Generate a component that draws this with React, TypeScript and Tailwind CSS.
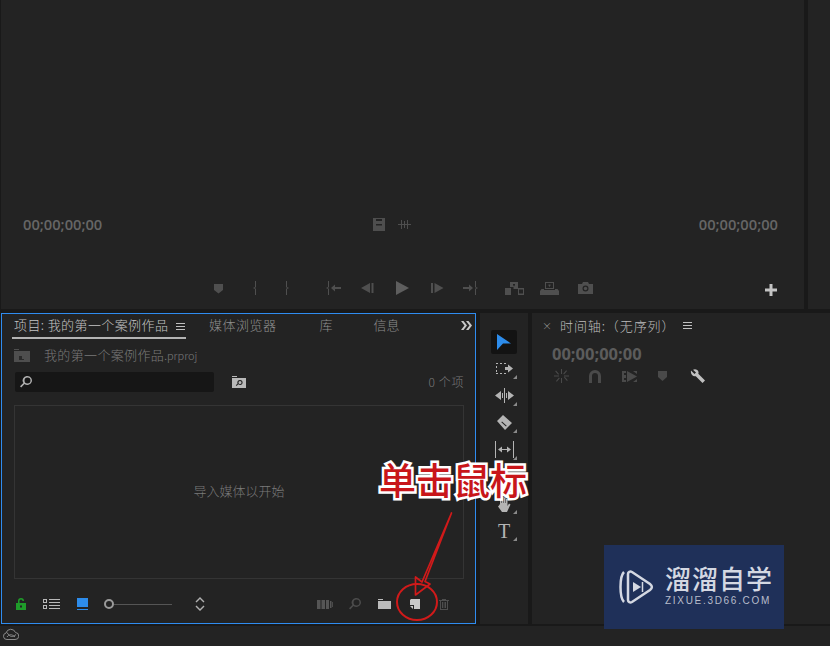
import type { ReactNode } from "react";

const cjk = "font-['Noto_Sans_CJK_SC','Liberation_Sans',sans-serif]";
const timecode = "font-['Open_Sans','Liberation_Sans',sans-serif]";

function Icon({ w = 16, h = 16, vb, className, children }: { w?: number; h?: number; vb?: string; className?: string; children: ReactNode }) {
	return (
		<svg width={w} height={h} viewBox={vb ?? `0 0 ${w} ${h}`} fill="currentColor" className={`block shrink-0 ${className ?? ""}`}>
			{children}
		</svg>
	);
}

function MenuLines({ className }: { className?: string }) {
	return (
		<Icon w={9} h={9} className={className}>
			<path d="M0 1h9v1H0zM0 4h9v1H0zM0 7h9v1H0z" />
		</Icon>
	);
}

function Slot({ className, children }: { className: string; children: ReactNode }) {
	return <div className={`flex w-[24px] justify-center ${className}`}>{children}</div>;
}

function MonitorTransport() {
	return (
		<div className="flex h-[20px] items-center text-[#4f4f4f]">
			<Slot className="ml-[205px]">
				<Icon w={11} h={11}><path d="M1 1h9v6l-4.500 3.500L1 7z" /></Icon>
			</Slot>
			<Slot className="ml-[13px]">
				<Icon w={6} h={14}><path d="M3 0h1v6L3 7l1 1v6H3V8L1 7l2-1z" /></Icon>
			</Slot>
			<Slot className="ml-[8px]">
				<Icon w={6} h={14}><path d="M2 0h1v6l2 1-2 1v6H2V8l1-1-1-1z" /></Icon>
			</Slot>
			<Slot className="ml-[22px]">
				<Icon w={16} h={14}><path d="M3 0h1v6L3 7l1 1v6H3V8L1 7l2-1zM6 7l4-3.500V6h6v2h-6v2.500z" /></Icon>
			</Slot>
			<Slot className="ml-[10px]">
				<Icon w={13} h={12}><path d="M0 6l9-5v10zM10.500 1H12.500V11H10.500z" /></Icon>
			</Slot>
			<Slot className="ml-[11px]">
				<Icon w={13} h={14} className="text-[#5e5e5e]"><path d="M0 0l13 7-13 7z" /></Icon>
			</Slot>
			<Slot className="ml-[11px]">
				<Icon w={13} h={12}><path d="M0 1h2v10H0zM3.500 1l9 5-9 5z" /></Icon>
			</Slot>
			<Slot className="ml-[10px]">
				<Icon w={16} h={14}><path d="M12 0h1v6l2 1-2 1v6h-1V8l1-1-1-1zM10 7L6 3.500V6H0v2h6v2.500z" /></Icon>
			</Slot>
			<Slot className="ml-[19px]">
				<Icon w={19} h={13}>
					<path d="M0 6h6v7H0zM5 0h8v7H8.500V5H5zM13 6h6v7h-6zM14 7.500v4h4v-4z" />
					<path d="M8 2h2v1L9 4.500 8 3z" fill="#232323" />
				</Icon>
			</Slot>
			<Slot className="ml-[11px]">
				<Icon w={19} h={13}>
					<path fillRule="evenodd" d="M5 0h9v7H5zM6 1v5h7V1zM8.500 2.500h2v1l-1 1.500-1-1.500zM1.500 7H4v1h11V7h2.500L19 9v4H0V9z" />
				</Icon>
			</Slot>
			<Slot className="ml-[12px]">
				<Icon w={15} h={12}>
					<path fillRule="evenodd" d="M0 2h4l1-2h5l1 2h4v10H0zM7.500 3.500a3 3 0 100 6 3 3 0 000-6z" />
					<circle cx="7.500" cy="6.500" r="1.700" />
				</Icon>
			</Slot>
			<Slot className="ml-[162px] mt-[4px] text-[#c4c4c4]">
				<Icon w={12} h={12}><path d="M4.500 0h3v4.500H12v3H7.500V12h-3V7.500H0v-3h4.500z" /></Icon>
			</Slot>
		</div>
	);
}

function SourceMonitor() {
	return (
		<div className="flex flex-1 flex-col bg-[#232323] pt-[214px]">
			<div className={`flex h-[20px] items-center pl-[22px] text-[14.7px] font-semibold text-[#666666] ${timecode}`}>
				<span className="w-[80px]">00;00;00;00</span>
				<div className="ml-[270px] flex items-center gap-[13px] text-[#4e4e4e]">
					<Icon w={12} h={13}><path fillRule="evenodd" d="M0 0h12v13H0zM3 6v1.500h6V6zM3 1v2h6V1z" /></Icon>
					<Icon w={13} h={9}><path d="M0 4h13v1H0zM3 0h1v9H3zM6 1h1v7H6zM9 0h1v9H9z" /></Icon>
				</div>
				<span className="ml-auto pr-[26px]">00;00;00;00</span>
			</div>
			<div className="mt-[44px]">
				<MonitorTransport />
			</div>
		</div>
	);
}

function ProjectHeader() {
	return (
		<div className={`flex h-[25px] items-stretch text-[13px] font-light leading-[22px] text-[#8e8e8e] ${cjk}`}>
			<div className="ml-[10px] flex h-[25px] w-[174px] items-start justify-between border-b-[2px] border-[#b4b4b4] pl-[2px] pr-[1px] text-[#c4c4c4]">
				<span className="whitespace-nowrap tracking-[0.4px]">项目: 我的第一个案例作品</span>
				<MenuLines className="mt-[8px] text-[#c0c0c0]" />
			</div>
			<span className="ml-[23px] tracking-[0.5px]">媒体浏览器</span>
			<span className="ml-[43px]">库</span>
			<span className="ml-[41px]">信息</span>
			<div className="ml-auto mr-[3px] flex h-[22px] items-center text-[#c8c8c8]">
				<Icon w={11} h={9}>
					<path d="M0 0h2.500l3.500 4.500L2.500 9H0l3.500-4.500zM5 0h2.500L11 4.500 7.500 9H5l3.500-4.500z" />
				</Icon>
			</div>
		</div>
	);
}

function ProjectFooter() {
	return (
		<div className="flex h-[20px] items-center pl-[14px] pr-[26px]">
			<Icon w={10} h={12} className="text-[#1f9c2a]">
				<path fillRule="evenodd" d="M0 5h10v7H0zM4 7.500v2h2v-2zM2 5V3a3 3 0 016 0H6.500a1.500 1.500 0 00-3 0v2z" />
			</Icon>
			<Icon w={17} h={10} className="ml-[17px] text-[#b8b8b8]">
				<path fillRule="evenodd" d="M0 0h4v4H0zM1 1v2h2V1zM0 6h4v4H0zM1 7v2h2V7zM6 0h11v1H6zM6 3h11v1H6zM6 6h11v1H6zM6 9h11v1H6z" />
			</Icon>
			<Icon w={11} h={12} className="ml-[17px] text-[#2d8ceb]">
				<path d="M0 0h11v9H0zM0 11h11v1H0z" />
			</Icon>
			<div className="ml-[16px] flex items-center">
				<span className="h-[10px] w-[10px] rounded-full border-[2px] border-[#9a9a9a]" />
				<span className="h-[1px] w-[58px] bg-[#555555]" />
			</div>
			<Icon w={10} h={14} className="ml-[23px] text-[#b0b0b0]">
				<path d="M5 0l4.500 4.500-1 1L5 2 1.500 5.500l-1-1zM5 14L.5 9.500l1-1L5 12l3.500-3.500 1 1z" />
			</Icon>
			<Icon w={16} h={9} className="ml-auto text-[#555555]">
				<path d="M0 0h3.500v9H0zM4.500 0h3.500v9H4.500zM9 0h3v9H9zM13 1h1.500v7H13zM15.200 2h.8v5h-.8z" />
			</Icon>
			<Icon w={12} h={12} className="ml-[16px] text-[#4c4c4c]">
				<path fillRule="evenodd" d="M7.500 0a4.500 4.500 0 11-3 7.900L1.200 11.500 0 10.300 3.400 7A4.500 4.500 0 017.500 0zm0 1.500a3 3 0 100 6 3 3 0 000-6z" />
			</Icon>
			<Icon w={13} h={10} className="ml-[17px] text-[#bcbcbc]">
				<path d="M0 0h5v1H0zM0 2h13v8H0z" />
			</Icon>
			<Icon w={10} h={10} className="ml-[19px] text-[#c8c8c8]">
				<path d="M0 1l1-1h9v10H4V6H0zM0 7h3v3z" />
			</Icon>
			<Icon w={10} h={11} className="ml-[19px] text-[#4e4e4e]">
				<path fillRule="evenodd" d="M0 1h10v1H9v9H1V2H0zM3 0h4v1H3zM2 2v8h6V2zM3 3h1v6H3zM4.700 3h.8v6h-.8zM6 3h1v6H6z" />
			</Icon>
		</div>
	);
}

function ProjectPanel() {
	return (
		<div className="ml-[1px] w-[475px] bg-[#2f8cf0] p-[1px]">
			<div className="flex h-full flex-col bg-[#232323]">
				<ProjectHeader />
				<div className={`mt-[6px] flex h-[20px] items-center pl-[12px] text-[13px] font-light text-[#7a7a7a] ${cjk}`}>
					<Icon w={16} h={13} className="text-[#4e4e4e]">
						<path d="M0 0h5v1H0zM0 2h16v11H0z" />
						<path d="M5 7h3v3h2v1H5z" fill="#2a2a2a" />
					</Icon>
					<span className="ml-[14px] tracking-[0.35px]">我的第一个案例作品<span className="text-[11px] tracking-normal">.prproj</span></span>
				</div>
				<div className={`mt-[7px] flex h-[20px] items-center pl-[13px] pr-[11px] text-[12px] font-light text-[#7a7a7a] ${cjk}`}>
					<div className="flex h-[20px] w-[199px] items-center rounded-[2px] bg-[#161616] pl-[5px] text-[#b0b0b0]">
						<Icon w={12} h={12}>
							<path fillRule="evenodd" d="M7.500 0a4.500 4.500 0 11-3 7.900L1.200 11.500 0 10.300 3.400 7A4.500 4.500 0 017.500 0zm0 1.500a3 3 0 100 6 3 3 0 000-6z" />
						</Icon>
					</div>
					<Icon w={14} h={12} className="ml-[18px] text-[#b8b8b8]">
						<path d="M0 0h5v1H0zM0 2h14v10H0z" />
						<path fillRule="evenodd" fill="#232323" d="M8 4a2.500 2.500 0 11-1.700 4.200L4.500 10l-.7-.7 1.700-1.800A2.500 2.500 0 018 4zm0 1a1.500 1.500 0 100 3 1.500 1.500 0 000-3z" />
					</Icon>
					<span className="ml-auto tracking-[0.6px]">0 个项</span>
				</div>
				<div className={`mx-[12px] mt-[13px] flex h-[174px] w-[450px] items-center justify-center border border-[#343434] pb-[2px] text-[13px] font-light text-[#7a7a7a] ${cjk}`}>
					导入媒体以开始
				</div>
				<div className="mt-[15px]">
					<ProjectFooter />
				</div>
			</div>
		</div>
	);
}

function ToolCorner({ children }: { children: ReactNode }) {
	return (
		<div className="relative flex h-[27px] w-[26px] items-center justify-center text-[#b4b4b4]">
			{children}
			<span className="absolute bottom-[3px] right-0 h-0 w-0 border-b-[4px] border-l-[4px] border-b-[#8a8a8a] border-l-transparent" />
		</div>
	);
}

function ToolsPanel() {
	return (
		<div className="flex w-[48px] flex-col items-center bg-[#232323] pt-[17px]">
			<div className="flex h-[24px] w-[26px] items-center justify-center rounded-[2px] bg-[#131313] text-[#2d8ceb]">
				<Icon w={14} h={16}><path d="M0 0l14 9.500H6L0 16z" /></Icon>
			</div>
			<div className="mt-[1px] flex flex-col">
				<ToolCorner>
					<Icon w={17} h={11}>
						<path d="M0 0h2v1H0zM4 0h2v1H4zM8 0h2v1H8zM0 3h1v2H0zM0 7h1v2H0zM0 10h2v1H0zM4 10h2v1H4zM8 10h2v1H8zM9 4h3V1.500L17 5.500l-5 4V7H9z" />
					</Icon>
				</ToolCorner>
				<ToolCorner>
					<Icon w={19} h={15}>
						<path d="M9 0h1v15H9zM0 7.500L6 3v9zM19 7.500L13 3v9zM7 5h1v5H7zM11 5h1v5h-1z" />
					</Icon>
				</ToolCorner>
				<ToolCorner>
					<Icon w={15} h={15}>
						<path fillRule="evenodd" d="M6 0l9 8-7 7-8-9zM5 6.500L4.300 7.200 9 11.500l.7-.7z" />
					</Icon>
				</ToolCorner>
				<ToolCorner>
					<Icon w={19} h={17}>
						<path d="M0 0h1v17H0zM18 0h1v17h-1zM3 8.500L7 5.500V8h5V5.500l4 3-4 3V9H7v2.500z" />
					</Icon>
				</ToolCorner>
				<div className="h-[27px]" />
				<ToolCorner>
					<Icon w={14} h={16}>
						<path d="M3 8V2.500h1.500V7H5V1h1.500v6H7V1.500h1.500V7H9V3h1.500v7L12 7.500l1.500 1L10 16H5L1 10.500l1-1z" />
					</Icon>
				</ToolCorner>
				<ToolCorner>
					<span className="font-['Liberation_Serif',serif] text-[20px] leading-none">T</span>
				</ToolCorner>
			</div>
		</div>
	);
}

function TimelinePanel() {
	return (
		<div className="flex flex-1 flex-col bg-[#232323]">
			<div className={`flex h-[25px] items-center pl-[10px] text-[13px] font-light text-[#bcbcbc] ${cjk}`}>
				<span className="w-[6px] text-[10px] leading-none text-[#a0a0a0]">×</span>
				<span className="ml-[12px] whitespace-nowrap tracking-[0.9px]">时间轴:（无序列）</span>
				<MenuLines className="ml-[8px] text-[#c0c0c0]" />
			</div>
			<div className={`mt-[6px] pl-[20px] text-[16.5px] font-bold leading-[20px] text-[#5c5c5c] ${timecode}`}>
				00;00;00;00
			</div>
			<div className="mt-[4px] flex h-[16px] items-center pl-[22px] text-[#4a4a4a]">
				<Icon w={15} h={14}>
					<path d="M7 0h1v5H7zM7 9h1v5H7zM0 6.500h5v1H0zM10 6.500h5v1h-5zM2 1.500l3 3.500-.8.700-3-3.500zM13 12l-3-3.500.8-.7 3 3.500zM2 12l3-3.500.8.700-3 3.500zM13 2l-3 3.500-.8-.7 3-3.500z" />
				</Icon>
				<Icon w={12} h={13} className="ml-[20px]">
					<path d="M0 13V6a6 6 0 0112 0v7H9V6a3 3 0 00-6 0v7z" />
				</Icon>
				<Icon w={15} h={13} className="ml-[21px]">
					<path d="M0 1h4v2H2v2h2v3H2v2h2v2H0zM5 1l10 5.500L5 12zM11 1h4v3zM11 12h4V9z" />
				</Icon>
				<Icon w={9} h={10} className="ml-[21px]">
					<path d="M0 0h9v6l-4.500 4L0 6z" />
				</Icon>
				<Icon w={15} h={15} className="ml-[23px] text-[#c0c0c0]">
					<path d="M1 1.500L4.500 5 6 3.500 3 .7C5 -.5 8 .5 8.500 3c.1.700 0 1.300-.2 1.800L15 11.500 12.500 14 5.800 7.200C3 8 .2 5.500 1 1.500z" />
				</Icon>
			</div>
		</div>
	);
}

function Annotation() {
	return (
		<div className="pointer-events-none absolute left-0 top-0 h-full w-full">
			<span className={`absolute left-[379px] top-[451px] whitespace-nowrap text-[37px] font-medium leading-[56px] text-[#c8161a] [-webkit-text-stroke:5px_white] [paint-order:stroke_fill] ${cjk}`}>
				单击鼠标
			</span>
			<svg width="830" height="646" className="absolute left-0 top-0" fill="none" stroke="#d01a1a">
				<path d="M451.500 513L422 582L415.500 577L415.500 595L430 584L425 581.500Z" strokeWidth="1.700" strokeLinejoin="round" />
				<ellipse cx="417" cy="602" rx="20" ry="18" strokeWidth="2" />
			</svg>
		</div>
	);
}

function Watermark() {
	return (
		<div className="absolute left-[604px] top-[545px] flex h-[84px] w-[180px] items-center bg-[#1f3059] pl-[15px] text-[#d4d8e2]">
			<svg width="35" height="36" viewBox="0 0 35 36" fill="none" stroke="currentColor" strokeWidth="2.500" className="block shrink-0">
				<path d="M5 3C2 6 1.500 12 1.500 18S2 30 5 33" />
				<path d="M9 5c0-2 2-3 4-2l18 12c2.500 2 2.500 4 0 6L13 33c-2 1-4 0-4-2z" />
				<path d="M14 13l8 5-8 5z" fill="currentColor" stroke="none" />
				<path d="M23.500 13v10" strokeWidth="1.500" />
			</svg>
			<div className="ml-[11px] flex flex-col">
				<span className="font-['Liberation_Sans','Noto_Sans_CJK_SC',sans-serif] text-[26px] font-medium leading-[24px] tracking-[1px]">溜溜自学</span>
				<span className="mt-[3px] font-['Liberation_Sans',sans-serif] text-[10px] leading-[11px] tracking-[1.7px] text-[#b8bdcb]">ZIXUE.3D66.COM</span>
			</div>
		</div>
	);
}

export default function App() {
	return (
		<div className="relative flex h-[646px] w-[830px] flex-col overflow-hidden bg-[#191919]">
			<div className="flex h-[309px] gap-[4px] pl-[1px]">
				<SourceMonitor />
				<div className="w-[22px] bg-[#232323]" />
			</div>
			<div className="mt-[4px] flex h-[311px] gap-[4px]">
				<ProjectPanel />
				<ToolsPanel />
				<TimelinePanel />
			</div>
			<div className="mt-[2px] flex flex-1 items-center bg-[#232323] pb-[4px] pl-[3px] text-[#8a8a8a]">
				<svg width="16" height="13" viewBox="0 0 16 13" fill="none" stroke="currentColor" strokeWidth="1" className="block">
					<path d="M4 11.500h8a3.500 3.500 0 00.500-7A5 5 0 003 5a3.300 3.300 0 001 6.500z" />
					<path d="M4 9c2-3 5-3 8 0M4 4.500c3 5 6 5 9 2" />
				</svg>
			</div>
			<Annotation />
			<Watermark />
		</div>
	);
}
